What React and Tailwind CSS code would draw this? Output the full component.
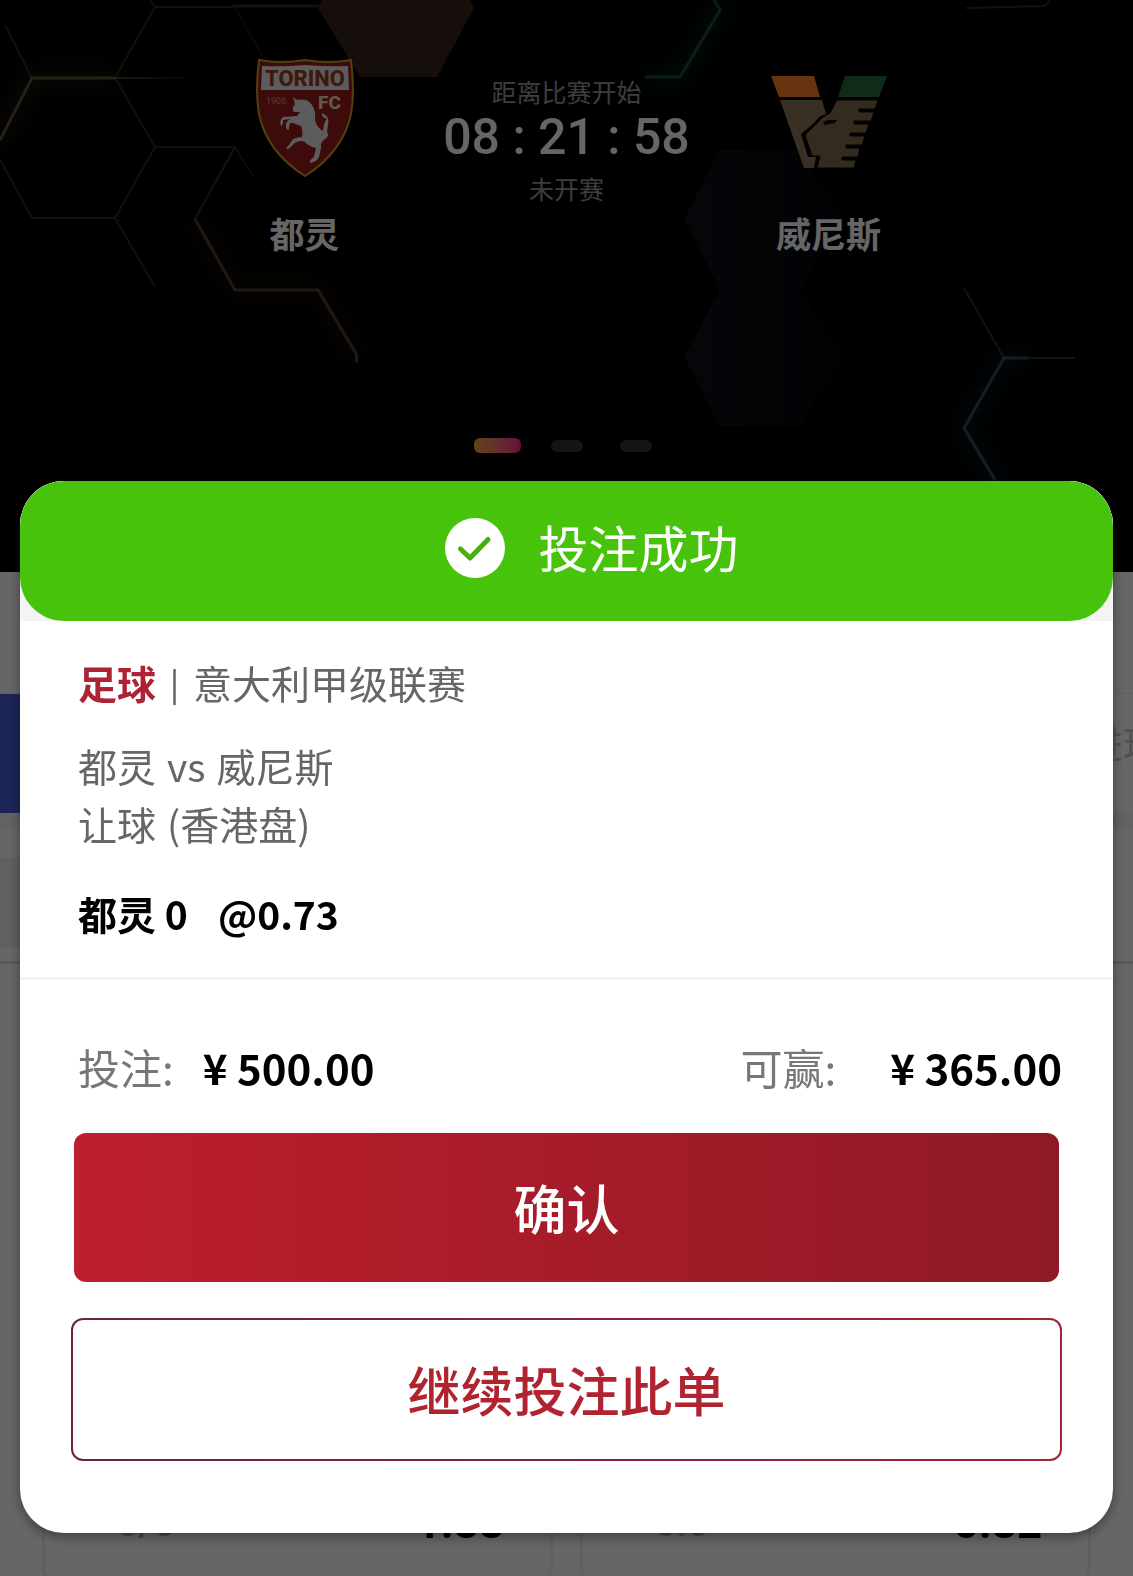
const odds = [
  { line: '0/5', price: '1.88' },
  { line: '0.5', price: '0.82' },
];

const HexBackground = () => (
  <svg
    className="absolute inset-0 w-full h-full"
    viewBox="0 0 1133 572"
    preserveAspectRatio="xMidYMin slice"
    fill="none"
    aria-hidden="true"
  >
    <defs>
      <filter id="glow" x="-50%" y="-50%" width="200%" height="200%">
        <feGaussianBlur stdDeviation="9" />
      </filter>
      <linearGradient id="fadeRight" x1="0" x2="1" y1="0" y2="0">
        <stop offset="0" stopColor="#4a4328" />
        <stop offset="1" stopColor="#4a4328" stopOpacity="0" />
      </linearGradient>
      <linearGradient id="panel" x1="0" x2="1" y1="0" y2="0">
        <stop offset="0" stopColor="#0e1118" />
        <stop offset="1" stopColor="#04050a" />
      </linearGradient>
    </defs>

    {/* Filled cells */}
    <path d="M322 0L318 8L360 77H437L474 8L470 0Z" fill="#35231d" />
    <path d="M684 219L720 150H800L843 219L800 290H720Z" fill="url(#panel)" />
    <path d="M684 357L720 290H800L843 357L800 426H720Z" fill="url(#panel)" />

    {/* Soft light behind the bright edges */}
    <g filter="url(#glow)" strokeWidth="12" opacity="0.35">
      <path d="M0 140L32 78H115" stroke="#54481c" />
      <path d="M195 219L235 290H318L357 360" stroke="#4a2a10" />
      <path d="M714 0L720 10L680 77H645" stroke="#0f6050" />
      <path d="M1030 358H1004L964 428L995 480" stroke="#0f4458" />
    </g>

    <g stroke="#242a2c" strokeWidth="2">
      <path d="M150 0L155 7L115 78L155 147L115 218H32L0 160" />
      <path d="M5 25L32 78" />
      <path d="M155 7H235" />
      <path d="M155 147H235L195 219" />
      <path d="M115 218L155 287" />
      <path d="M235 7L262 55" stroke="#15191a" />
      <path d="M235 147L253 176" stroke="#2c1a12" />
      <path d="M966 8L1045 6L1050 0" stroke="#1c3234" />
    </g>
    <path d="M0 140L32 78H115" stroke="#5c5436" strokeWidth="3" />
    <path d="M115 77H195V79H115Z" fill="url(#fadeRight)" />
    <path d="M232 6H318" stroke="#332b20" strokeWidth="3" />
    <path d="M195 219L235 290H318L355 352Q358 358 356 362" stroke="#4a4238" strokeWidth="3" />
    <path d="M195 219L235 147" stroke="#302822" strokeWidth="2" />
    <path d="M714 0L720 10L680 77H645" stroke="#1f4a46" strokeWidth="3" />
    <path d="M964 288L1004 358H1075" stroke="#26302c" strokeWidth="2" />
    <path d="M1028 358H1004L964 428L995 480" stroke="#28505c" strokeWidth="3" />
  </svg>
);

const TorinoLogo = () => (
  <svg className="h-[120px] w-[100px]" viewBox="0 0 100 120" role="img" aria-label="Torino FC">
    <path
      d="M4 2Q26 6 50 2Q74 6 96 2Q100 34 96 56Q88 94 50 118Q12 94 4 56Q0 34 4 2Z"
      fill="#9c1c1c"
      stroke="#d2a021"
      strokeWidth="2"
    />
    <path d="M7 8Q28 9 50 7Q72 9 93 8L94 32H6Z" fill="#e6e4ea" />
    <text x="50" y="28" textAnchor="middle" fontSize="22" fontWeight="800" fill="#9c3c18" className="font-['Roboto',sans-serif]">
      TORINO
    </text>
    <text x="11" y="46" fontSize="9" fill="#d98c8c" className="font-['Roboto',sans-serif]">1906</text>
    <text x="63" y="51" fontSize="19" fontWeight="800" fill="#e9dfc4" className="font-['Roboto',sans-serif]">FC</text>
    <path
      d="M38 39L42 42Q52 40 57 47Q61 53 60 62Q62 70 68 73Q69 63 72 61Q66 59 67 55Q75 58 73 67L72 74Q75 78 70 81Q65 84 66 90L64 99Q62 104 55 105Q54 102 59 99L61 90Q53 88 50 84L47 83Q40 83 37 88L33 91Q29 91 34 87L38 81Q43 79 47 79Q48 72 46 68L38 65Q34 64 34 70Q34 74 31 70Q30 64 35 61L28 62Q28 68 26 68Q24 62 28 59L42 58L45 54L39 54Q36 52 40 46Z"
      fill="#e6e4ea"
    />
  </svg>
);

const VeneziaLogo = () => (
  <svg className="h-[120px] w-[118px]" viewBox="0 0 118 120" role="img" aria-label="Venezia FC">
    <path d="M1 18H44L50 39H9Z" fill="#ff8628" />
    <path d="M75 18H117L109 39H68Z" fill="#2a6c43" />
    <path d="M10 42H52L56 56L49 59L43 66L31 76L38 99H46L44 110H34Z" fill="#8d7956" />
    <path
      d="M67 42H108L105 51H89V54H104L101 63H84V66H99L96 75H80V78H95L92 87H76V90H90L88 99H72V102H86L84 110H47L50 98H42L35 77L46 66L53 59L60 55Z"
      fill="#806c4d"
      stroke="#0a0806"
      strokeWidth="1"
    />
    <path d="M53 64Q58 61 67 62L65 65L55 67Z" fill="#120f0a" />
  </svg>
);

const MatchHeader = () => (
  <header className="relative h-[572px] shrink-0 overflow-hidden bg-[#020203] text-white">
    <HexBackground />
    <div className="relative flex h-full flex-col items-center pt-[58px]">
      <div className="grid grid-cols-[262px_262px_262px] text-center">
        <div className="flex flex-col items-center gap-7">
          <TorinoLogo />
          <span className="text-[35px] leading-[54px] font-bold">都灵</span>
        </div>
        <div className="flex flex-col items-center pt-[15px]">
          <span className="text-[25px] leading-[36px] text-[#999]">距离比赛开始</span>
          <span className="font-['Roboto',sans-serif] text-[50px] leading-[57px] font-medium whitespace-nowrap">
            08 : 21 : 58
          </span>
          <span className="text-[25px] leading-[44px] text-[#999]">未开赛</span>
        </div>
        <div className="flex flex-col items-center gap-7">
          <VeneziaLogo />
          <span className="text-[35px] leading-[54px] font-bold">威尼斯</span>
        </div>
      </div>
      {/* Carousel pager */}
      <div className="mt-[178px] grid grid-cols-[69px_69px_69px] items-center justify-items-center">
        <span className="h-[15px] w-[47px] rounded-md bg-linear-to-r from-[#f2a83c] to-[#ff0890]" />
        <span className="h-3 w-8 rounded-md bg-[#333]" />
        <span className="h-3 w-8 rounded-md bg-[#333]" />
      </div>
    </div>
  </header>
);

const OddsPage = () => (
  <main className="flex flex-1 flex-col bg-white">
    <div className="h-[122px] shrink-0 border-b-2 border-[#f4f4f4]" />
    <div className="flex h-[119px] shrink-0 items-center justify-between">
      <div className="h-full w-40 bg-[#465cdc]" />
      <span className="w-[48px] overflow-hidden pb-6 text-[38px] whitespace-nowrap text-[#c8c8c8]">进球</span>
    </div>
    <div className="h-4 shrink-0 bg-[#f4f4f4]" />
    <div className="h-[29px] shrink-0" />
    <div className="h-[90px] w-1/2 shrink-0 bg-[#eff0f4]" />
    <div className="h-4 shrink-0 border-b-3 border-[#ddd]" />
    <div className="grid h-[620px] shrink-0 grid-cols-2 gap-[27px] px-[42px]">
      {odds.map((item) => (
        <div
          key={item.price}
          className="flex items-end justify-between rounded-2xl border-3 border-[#efefef] pr-[46px] pb-9 pl-[72px] font-['Roboto',sans-serif] leading-[44px]"
        >
          <span className="text-[38px] font-medium text-[#b5b5a5]">{item.line}</span>
          <span className="text-[44px] font-bold text-black">{item.price}</span>
        </div>
      ))}
    </div>
  </main>
);

const BetSuccessDialog = () => (
  <section
    role="dialog"
    aria-modal="true"
    aria-label="投注成功"
    className="w-full overflow-hidden rounded-[44px] bg-white shadow-[0_4px_12px_rgba(0,0,0,0.4)]"
  >
    <div className="bg-[#f4f4f4]">
      <div className="flex h-[140px] items-center justify-center gap-[34px] rounded-[44px] bg-[#46c30a] pb-[6px] pl-[50px] text-white">
        <svg className="size-[60px]" viewBox="0 0 60 60" fill="none" aria-hidden="true">
          <circle cx="30" cy="30" r="30" fill="#fff" />
          <path d="M15.500 31L25 40L43 21.500" stroke="#46b00f" strokeWidth="5" strokeLinecap="round" strokeLinejoin="round" />
        </svg>
        <h1 className="pb-1 text-[50px] leading-[60px]">投注成功</h1>
      </div>
    </div>

    {/* Bet details */}
    <div className="border-b-3 border-[#f3f3f3] px-[58px] pt-8 pb-[35px] text-[39px] leading-[58px] text-[#666]">
      <p className="flex items-center gap-[14px]">
        <b className="text-[#ae2333]">足球</b>
        <span className="text-[32px] font-medium">|</span>
        <span>意大利甲级联赛</span>
      </p>
      <p className="mt-[25px] flex gap-[11px]">
        <span>都灵</span>
        <span>vs</span>
        <span>威尼斯</span>
      </p>
      <p className="flex gap-[11px]">
        <span>让球</span>
        <span>(香港盘)</span>
      </p>
      <p className="mt-8 flex gap-[30px] font-bold text-black">
        <span>都灵 0</span>
        <span>@0.73</span>
      </p>
    </div>

    {/* Stake and actions */}
    <div className="px-[51px] pt-[57px] pb-[72px]">
      <div className="flex items-center justify-between pl-[7px] text-[42px] leading-[60px]">
        <div className="flex gap-[29px]">
          <span className="text-[#777]">投注:</span>
          <span className="font-bold text-black">¥ 500.00</span>
        </div>
        <div className="flex gap-[54px]">
          <span className="text-[#777]">可赢:</span>
          <span className="font-bold text-black">¥ 365.00</span>
        </div>
      </div>
      <div className="mt-9 px-[3px]">
        <button
          type="button"
          className="h-[149px] w-full rounded-xl bg-linear-to-r from-[#be1e2d] to-[#8f1925] text-[53px] font-medium text-white"
        >
          确认
        </button>
      </div>
      <button
        type="button"
        className="mt-9 block h-[143px] w-full rounded-xl border-2 border-transparent text-[53px] font-medium text-[#b0232f] [background:linear-gradient(#fff,#fff)_padding-box,linear-gradient(to_right,#6b2437,#a02436)_border-box]"
      >
        继续投注此单
      </button>
    </div>
  </section>
);

const App = () => {
  return (
    <div className="relative flex h-screen flex-col overflow-hidden font-['Noto_Sans_CJK_SC',sans-serif]">
      <MatchHeader />
      <OddsPage />
      <div className="fixed inset-0 flex items-end bg-black/60 px-5 pb-[43px]">
        <BetSuccessDialog />
      </div>
    </div>
  );
};

export default App;
